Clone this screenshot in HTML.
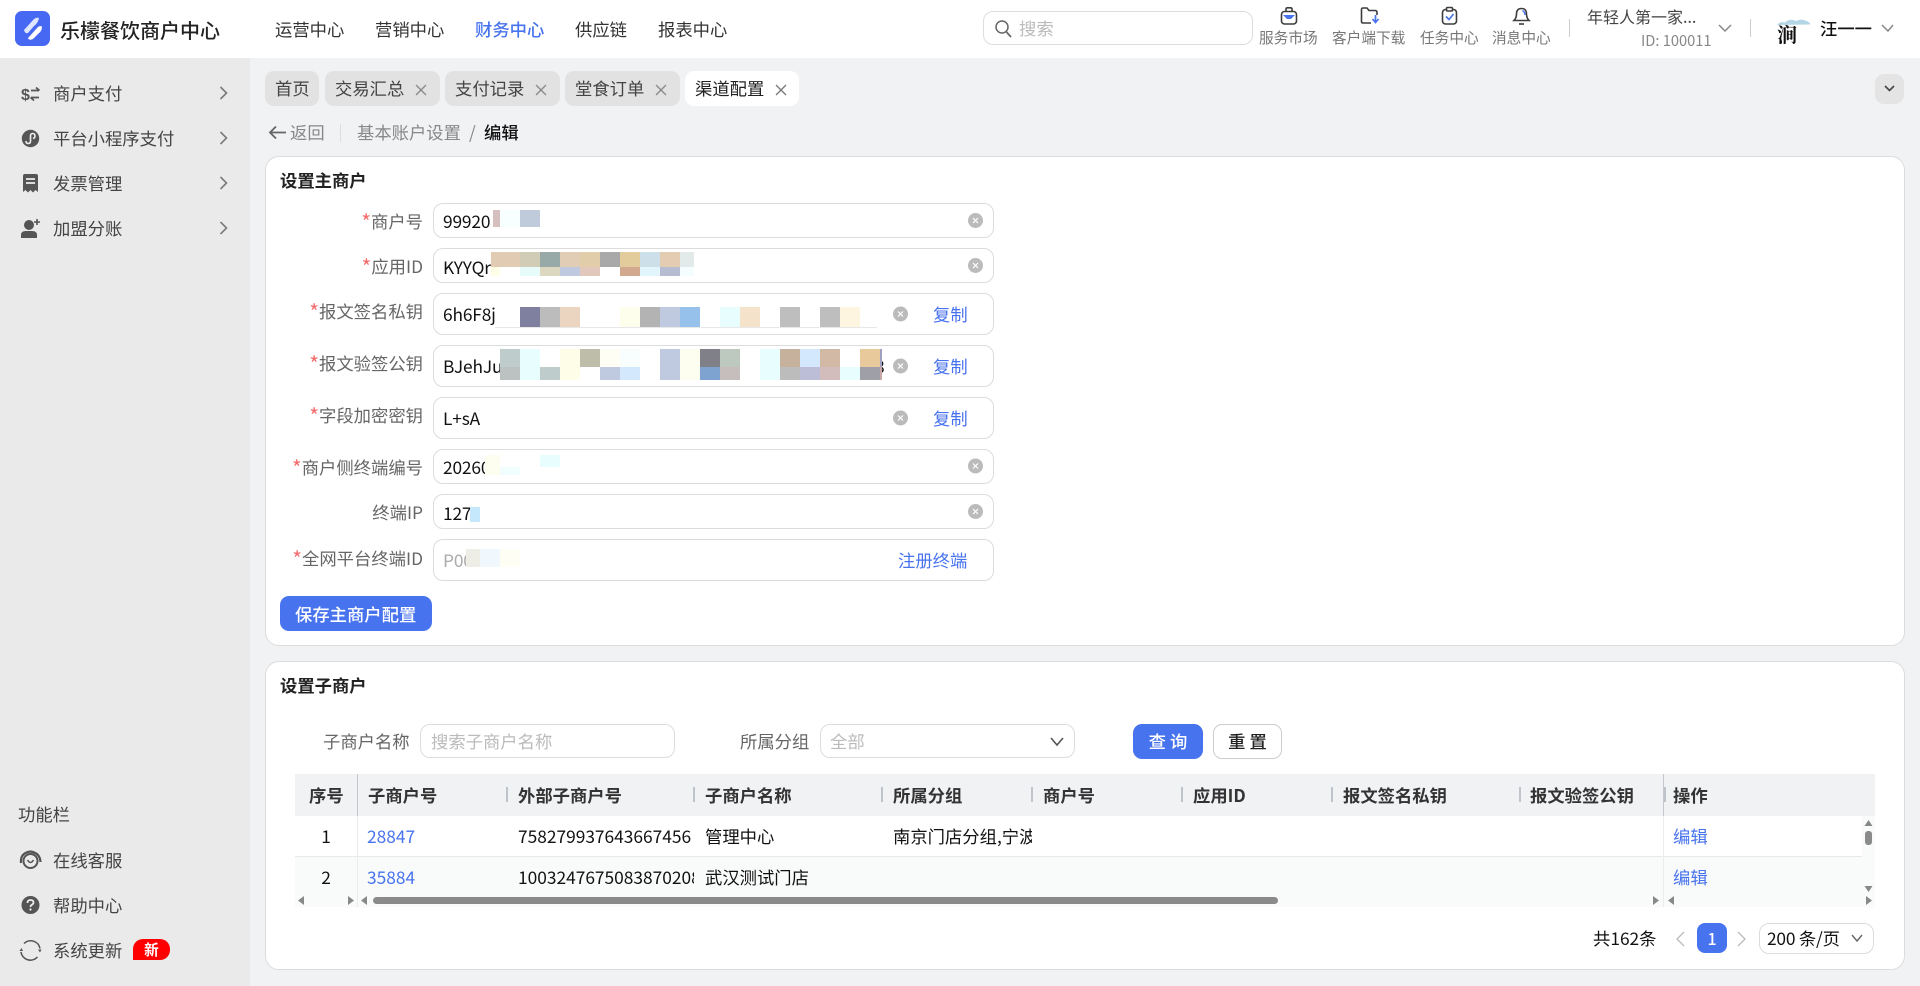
<!DOCTYPE html>
<html lang="zh-CN"><head><meta charset="utf-8"><title>乐檬餐饮商户中心</title>
<style>
html,body{margin:0;padding:0}
body{width:1920px;height:986px;overflow:hidden;position:relative;background:#f1f2f4;font-family:"Noto Sans CJK SC","Liberation Sans",sans-serif;font-size:17.33px;color:#333}
.b{position:absolute;box-sizing:border-box}
.t{position:absolute;white-space:nowrap;height:24px;line-height:24px;overflow:hidden}
.inp{position:absolute;box-sizing:border-box;left:433px;width:561px;background:#fff;border:1.5px solid #dcdcdc;border-radius:10px}
.lab{position:absolute;left:260px;width:163px;text-align:right;white-space:nowrap;height:24px;line-height:24px;color:#666}
.lab i{font-style:normal;color:#f56c6c;font-size:21px;line-height:0;position:relative;top:2px}
.v{position:absolute;left:443px;white-space:nowrap;height:24px;line-height:24px;color:#111;letter-spacing:-.15px}
.a{color:#4873ee}
.tab{position:absolute;top:71px;height:35px;background:#e2e2e2;border-radius:9px}
.h{font-weight:700;color:#333}
.sep{position:absolute;top:787px;width:1.5px;height:15px;background:#bfc3cc}
</style></head><body>
<!-- header -->
<div class="b" style="left:0;top:0;width:1920px;height:58px;background:#fff"></div>
<div class="t" style="left:60px;top:18px;font-size:20px;color:#222;font-weight:500">乐檬餐饮商户中心</div>
<div class="t" style="left:275px;top:17px;color:#333">运营中心</div>
<div class="t" style="left:375px;top:17px;color:#333">营销中心</div>
<div class="t a" style="left:475px;top:17px;font-weight:500">财务中心</div>
<div class="t" style="left:575px;top:17px;color:#333">供应链</div>
<div class="t" style="left:658px;top:17px;color:#333">报表中心</div>
<div class="b" style="left:983px;top:11px;width:270px;height:34px;border:1.5px solid #ddd;border-radius:10px;background:#fff"></div>
<div class="t" style="left:1019px;top:16px;color:#bbb">搜索</div>
<div class="t" style="left:1259px;top:26px;font-size:14.67px;color:#777">服务市场</div>
<div class="t" style="left:1332px;top:26px;font-size:14.67px;color:#777">客户端下载</div>
<div class="t" style="left:1420px;top:26px;font-size:14.67px;color:#777">任务中心</div>
<div class="t" style="left:1492px;top:26px;font-size:14.67px;color:#777">消息中心</div>
<div class="t" style="left:1587px;top:4px;font-size:16px;color:#444">年轻人第一家...</div>
<div class="t" style="left:1641px;top:29px;font-size:14.67px;color:#888">ID: 100011</div>
<div class="b" style="left:1569px;top:19px;width:1px;height:18px;background:#ccc"></div>
<div class="b" style="left:1750px;top:19px;width:1px;height:18px;background:#ccc"></div>
<div class="t" style="left:1820px;top:16px;color:#111;font-weight:500">汪一一</div>
<!-- sidebar -->
<div class="b" style="left:0;top:58px;width:250px;height:928px;background:#eaeaea"></div>
<div class="t" style="left:53px;top:81px;color:#444">商户支付</div>
<div class="t" style="left:53px;top:126px;color:#444">平台小程序支付</div>
<div class="t" style="left:53px;top:171px;color:#444">发票管理</div>
<div class="t" style="left:53px;top:216px;color:#444">加盟分账</div>
<div class="t" style="left:18px;top:802px;color:#444">功能栏</div>
<div class="t" style="left:53px;top:848px;color:#444">在线客服</div>
<div class="t" style="left:53px;top:893px;color:#444">帮助中心</div>
<div class="t" style="left:53px;top:938px;color:#444">系统更新</div>
<div class="b" style="left:133px;top:939px;width:37px;height:21px;background:#f00;border-radius:10px 10px 10px 0;color:#fff;font-size:14.67px;font-weight:700;text-align:center;line-height:21px">新</div>
<!-- tabs -->
<div class="tab" style="left:265px;width:54px"></div>
<div class="tab" style="left:325px;width:115px"></div>
<div class="tab" style="left:445px;width:115px"></div>
<div class="tab" style="left:565px;width:115px"></div>
<div class="tab" style="left:685px;width:114px;background:#fff"></div>
<div class="t" style="left:275px;top:76px;color:#444">首页</div>
<div class="t" style="left:335px;top:76px;color:#444">交易汇总</div>
<div class="t" style="left:455px;top:76px;color:#444">支付记录</div>
<div class="t" style="left:575px;top:76px;color:#444">堂食订单</div>
<div class="t" style="left:695px;top:76px;color:#222">渠道配置</div>
<div class="b" style="left:1875px;top:74px;width:29px;height:30px;background:#e4e4e4;border-radius:9px"></div>
<!-- breadcrumb -->
<div class="t" style="left:290px;top:120px;color:#888">返回</div>
<div class="b" style="left:340px;top:124px;width:1px;height:18px;background:#ddd"></div>
<div class="t" style="left:357px;top:120px;color:#888">基本账户设置</div>
<div class="t" style="left:469px;top:120px;color:#888">/</div>
<div class="t" style="left:484px;top:120px;color:#111;font-weight:500">编辑</div>
<!-- card 1 -->
<div class="b" style="left:265px;top:156px;width:1640px;height:490px;background:#fff;border:1.5px solid #dcdcdc;border-radius:14px"></div>
<div class="t h" style="left:280px;top:168px;color:#222">设置主商户</div>

<div class="inp" style="top:203px;height:35px"></div>
<div class="inp" style="top:248px;height:35px"></div>
<div class="inp" style="top:293px;height:42px"></div>
<div class="inp" style="top:345px;height:42px"></div>
<div class="inp" style="top:397px;height:42px"></div>
<div class="inp" style="top:449px;height:35px"></div>
<div class="inp" style="top:494px;height:35px"></div>
<div class="inp" style="top:539px;height:42px"></div>

<div class="lab" style="top:209px"><i>*</i>商户号</div>
<div class="lab" style="top:254px"><i>*</i>应用ID</div>
<div class="lab" style="top:299px"><i>*</i>报文签名私钥</div>
<div class="lab" style="top:351px"><i>*</i>报文验签公钥</div>
<div class="lab" style="top:403px"><i>*</i>字段加密密钥</div>
<div class="lab" style="top:455px"><i>*</i>商户侧终端编号</div>
<div class="lab" style="top:500px">终端IP</div>
<div class="lab" style="top:546px"><i>*</i>全网平台终端ID</div>

<div class="v" style="top:209px">99920</div>
<div class="v" style="top:255px">KYYQr</div>
<div class="v" style="top:302px">6h6F8j</div>
<div class="v" style="top:354px">BJehJu-</div>
<div class="v" style="left:875px;top:354px">8</div>
<div class="v" style="top:406px">L+sA</div>
<div class="v" style="top:455px">20260</div>
<div class="v" style="top:501px">127</div>
<div class="v" style="top:548px;color:#aaa">P00</div>

<div class="t a" style="left:933px;top:302px">复制</div>
<div class="t a" style="left:933px;top:354px">复制</div>
<div class="t a" style="left:933px;top:406px">复制</div>
<div class="t a" style="left:898px;top:548px">注册终端</div>

<div class="b" style="left:280px;top:596px;width:152px;height:35px;background:#4873ee;border-radius:9px"></div>
<div class="t" style="left:295px;top:602px;color:#fff;font-weight:500">保存主商户配置</div>

<!-- card 2 -->
<div class="b" style="left:265px;top:661px;width:1640px;height:309px;background:#fff;border:1.5px solid #dcdcdc;border-radius:14px"></div>
<div class="t h" style="left:280px;top:673px;color:#222">设置子商户</div>
<div class="t" style="left:323px;top:729px;color:#666">子商户名称</div>
<div class="b" style="left:420px;top:724px;width:255px;height:34px;border:1.5px solid #dcdcdc;border-radius:10px"></div>
<div class="t" style="left:431px;top:729px;color:#bbb">搜索子商户名称</div>
<div class="t" style="left:740px;top:729px;color:#666">所属分组</div>
<div class="b" style="left:820px;top:724px;width:255px;height:34px;border:1.5px solid #dcdcdc;border-radius:10px"></div>
<div class="t" style="left:830px;top:729px;color:#bbb">全部</div>
<div class="b" style="left:1133px;top:724px;width:70px;height:35px;background:#4873ee;border-radius:9px;color:#fff;text-align:center;line-height:34px;font-weight:500;letter-spacing:4px;padding-left:4px">查询</div>
<div class="b" style="left:1213px;top:724px;width:69px;height:35px;background:#fff;border:1.5px solid #ccc;border-radius:9px;color:#222;text-align:center;line-height:31px;font-weight:500;letter-spacing:4px;padding-left:4px">重置</div>

<!-- table -->
<div class="b" style="left:295px;top:774px;width:1580px;height:42px;background:#f1f2f4"></div>
<div class="b" style="left:295px;top:856px;width:1567px;height:1px;background:#e9e9e9"></div>
<div class="b" style="left:295px;top:857px;width:1580px;height:50px;background:#f9fafa"></div>
<div class="b" style="left:1862px;top:816px;width:13px;height:41px;background:#f9fafa"></div>
<div class="b" style="left:357px;top:774px;width:1px;height:42px;background:#c4c7cd"></div>
<div class="b" style="left:357px;top:816px;width:1px;height:91px;background:#ececec"></div>
<div class="b" style="left:1663px;top:774px;width:1px;height:42px;background:#c4c7cd"></div>
<div class="b" style="left:1663px;top:816px;width:1px;height:91px;background:#ececec"></div>
<div class="sep" style="left:506px"></div><div class="sep" style="left:693px"></div><div class="sep" style="left:881px"></div><div class="sep" style="left:1031px"></div><div class="sep" style="left:1181px"></div><div class="sep" style="left:1331px"></div><div class="sep" style="left:1519px"></div><div class="sep" style="left:1664px"></div>
<div class="t h" style="left:309px;top:783px">序号</div>
<div class="t h" style="left:368px;top:783px">子商户号</div>
<div class="t h" style="left:518px;top:783px">外部子商户号</div>
<div class="t h" style="left:705px;top:783px">子商户名称</div>
<div class="t h" style="left:893px;top:783px">所属分组</div>
<div class="t h" style="left:1043px;top:783px">商户号</div>
<div class="t h" style="left:1193px;top:783px">应用ID</div>
<div class="t h" style="left:1343px;top:783px">报文签名私钥</div>
<div class="t h" style="left:1530px;top:783px">报文验签公钥</div>
<div class="t h" style="left:1673px;top:783px">操作</div>

<div class="t" style="left:295px;width:62px;text-align:center;top:824px;color:#111">1</div>
<div class="t a" style="left:367px;top:824px">28847</div>
<div class="t" style="left:518px;width:176px;top:824px;color:#111">758279937643667456</div>
<div class="t" style="left:705px;top:824px;color:#111">管理中心</div>
<div class="t" style="left:893px;width:139px;top:824px;color:#111">南京门店分组,宁波</div>
<div class="t a" style="left:1673px;top:824px">编辑</div>
<div class="t" style="left:295px;width:62px;text-align:center;top:865px;color:#111">2</div>
<div class="t a" style="left:367px;top:865px">35884</div>
<div class="t" style="left:518px;width:176px;top:865px;color:#111">100324767508387020812</div>
<div class="t" style="left:705px;top:865px;color:#111">武汉测试门店</div>
<div class="t a" style="left:1673px;top:865px">编辑</div>
<div class="b" style="left:373px;top:897px;width:905px;height:7px;background:#8a8a8a;border-radius:4px"></div>
<div class="b" style="left:1865px;top:831px;width:7px;height:14px;background:#8a8a8a;border-radius:3px"></div>

<!-- pagination -->
<div class="t" style="left:1593px;top:926px;color:#111">共162条</div>
<div class="b" style="left:1697px;top:923px;width:30px;height:30px;background:#4873ee;border-radius:8px;color:#fff;text-align:center;line-height:30px;font-size:16px;font-weight:500">1</div>
<div class="b" style="left:1759px;top:923px;width:115px;height:31px;border:1.5px solid #dcdcdc;border-radius:10px"></div>
<div class="t" style="left:1767px;top:926px;color:#111;letter-spacing:-.2px">200 条/页</div>

<!-- overlay: mosaics and icons -->
<svg class="b" style="left:0;top:0" width="1920" height="986" viewBox="0 0 1920 986" fill="none">
<!-- logo -->
<rect x="15" y="11" width="35" height="35" rx="7" fill="#4668f2"/>
<path d="M24 30 L34 19 Q37 17 39 18 Q38 23 34 26 L28 33 Q25 34 24 30Z" fill="#dfe6ff"/>
<path d="M28 38 L38 27 Q41 25 42 27 Q42 31 38 34 L33 39 Q29 41 28 38Z" fill="#fff"/>
<!-- header chevrons -->
<circle cx="1002" cy="27" r="6" stroke="#666" stroke-width="1.5"/><path d="M1006.5 32 L1011 37" stroke="#666" stroke-width="1.7"/>
<g stroke="#888" stroke-width="1.5"><path d="M1719 25 L1725 31 L1731 25"/><path d="M1882 25 L1888 31 L1893 25"/></g>
<!-- top icons -->
<g stroke="#3d3d3d" stroke-width="1.6">
<rect x="1281.5" y="11.5" width="15" height="12.5" rx="3"/><path d="M1286 11 V9 Q1286 7.8 1287.5 7.8 H1290.5 Q1292 7.8 1292 9 V11"/>
<path d="M1361.5 21.5 V9.5 Q1361.5 8 1363 8 H1367 L1369 10.5 H1375 Q1377 10.5 1377 12.5 V15 M1361.5 21.5 Q1361.5 23 1363 23 H1371"/>
<rect x="1442.5" y="9.5" width="14" height="14.5" rx="3"/><rect x="1446.5" y="7.5" width="6" height="3.5" rx="1" fill="#fff"/>
<path d="M1514 20.5 H1529 Q1526.5 18 1526.5 14 Q1526.5 8.5 1521.5 8.5 Q1516.5 8.5 1516.5 14 Q1516.5 18 1514 20.5Z"/><path d="M1519 24 H1524"/>
</g>
<path d="M1283 15 H1295 L1291 19 H1287Z" fill="#4873ee"/>
<path d="M1375.5 15 V21.5 M1372.5 19 L1375.5 22.5 L1378.5 19" stroke="#4873ee" stroke-width="1.7"/>
<path d="M1446 16.5 L1449 19.5 L1453.5 14" stroke="#4873ee" stroke-width="1.7"/>
<path d="M1522.5 10.5 Q1525 12 1525 15" stroke="#4873ee" stroke-width="1.5"/>
<!-- avatar -->
<circle cx="1791" cy="28.5" r="18.5" fill="#fff"/>
<path d="M1777 25 Q1780 21 1785 22.500 Q1790 18 1796 21 Q1802 17.500 1810 23 L1810 24.500 L1777 25Z" fill="#b4d6e6"/>
<text x="1777" y="42" font-family="Noto Serif CJK SC,serif" font-size="20" font-weight="700" fill="#111">涧</text>
<!-- sidebar icons -->
<text x="21" y="100" font-family="Liberation Sans,sans-serif" font-size="16" font-weight="700" fill="#555">$</text>
<g stroke="#555" stroke-width="1.8"><path d="M31 90.500 H39 M36 87.500 L39.500 90.500"/><path d="M39 97.500 H31 M34 100.500 L30.500 97.500"/></g>
<circle cx="30.5" cy="138.5" r="8.7" fill="#555"/>
<path d="M26 141 Q26 143.5 28.3 143.5 Q30.5 143.5 30.5 141 V136 Q30.5 133.5 32.7 133.5 Q35 133.5 35 136 Q35 138 33 138.500" stroke="#eee" stroke-width="1.6"/>
<path d="M23 176 Q23 174 25 174 H36 Q38 174 38 176 V192 L35.500 190 L33 192.500 L30.500 190 L28 192.500 L25.500 190 L23 192Z" fill="#555"/>
<path d="M26 179 H35 M26 183 H35" stroke="#eee" stroke-width="1.7"/>
<circle cx="29" cy="225" r="5" fill="#555"/><path d="M21 238 V235 Q21 231 26 231 H32 Q37 231 37 235 V238Z" fill="#555"/>
<path d="M37 219 V225 M34 222 H40" stroke="#555" stroke-width="1.6"/>
<g stroke="#7a7a7a" stroke-width="1.6"><path d="M220.500 87 L226.500 93 L220.500 99"/><path d="M220.500 132 L226.500 138 L220.500 144"/><path d="M220.500 177 L226.500 183 L220.500 189"/><path d="M220.500 222 L226.500 228 L220.500 234"/></g>
<!-- function icons -->
<circle cx="30.500" cy="861" r="7" stroke="#555" stroke-width="2"/><path d="M27.500 860 Q30.500 865 33.500 860" stroke="#555" stroke-width="1.5"/>
<path d="M21 863 Q20 853 30.500 851.500 Q40 853 40.500 862" stroke="#555" stroke-width="2.200"/>
<circle cx="30.500" cy="905" r="9" fill="#555"/>
<path d="M27.500 903 Q27.500 900 30.500 900 Q33.500 900 33.500 902.500 Q33.500 904 31.500 905 Q30.500 905.500 30.500 907" stroke="#eee" stroke-width="1.700"/><circle cx="30.500" cy="909.500" r="1.100" fill="#eee"/>
<path d="M24 943.500 A9.500 9.500 0 0 1 40 948.500" stroke="#555" stroke-width="1.500"/><path d="M37.500 957 A9.500 9.500 0 0 1 21 952" stroke="#555" stroke-width="1.500"/>
<path d="M38 949.500 L41.500 949.500 L40 952.500Z M19.500 951 L23 951 L21.500 948Z" fill="#555"/>
<!-- tab close -->
<g stroke="#888" stroke-width="1.300"><path d="M416 85 L426 95 M426 85 L416 95"/><path d="M536 85 L546 95 M546 85 L536 95"/><path d="M656 85 L666 95 M666 85 L656 95"/></g>
<path d="M776 85 L786 95 M786 85 L776 95" stroke="#777" stroke-width="1.300"/>
<path d="M1885 86 L1889.500 90.500 L1894 86" stroke="#444" stroke-width="1.600"/>
<!-- back arrow -->
<path d="M270 132.500 H286 M276 126.500 L270 132.500 L276 138.500" stroke="#666" stroke-width="1.800"/>
<!-- clear icons -->
<g>
<circle cx="975.500" cy="220.500" r="7.500" fill="#bbb"/><circle cx="975.500" cy="265.500" r="7.500" fill="#bbb"/>
<circle cx="900.500" cy="314" r="7.500" fill="#bbb"/><circle cx="900.500" cy="366" r="7.500" fill="#bbb"/><circle cx="900.500" cy="418" r="7.500" fill="#bbb"/>
<circle cx="975.500" cy="466" r="7.500" fill="#bbb"/><circle cx="975.500" cy="511.500" r="7.500" fill="#bbb"/>
</g>
<g stroke="#fff" stroke-width="1.200">
<path d="M973 218 l5 5 m0 -5 l-5 5"/><path d="M973 263 l5 5 m0 -5 l-5 5"/>
<path d="M898 311.500 l5 5 m0 -5 l-5 5"/><path d="M898 363.500 l5 5 m0 -5 l-5 5"/><path d="M898 415.500 l5 5 m0 -5 l-5 5"/>
<path d="M973 463.500 l5 5 m0 -5 l-5 5"/><path d="M973 509 l5 5 m0 -5 l-5 5"/>
</g>
<!-- mosaics -->
<g shape-rendering="crispEdges">
<rect x="493" y="210" width="7" height="17" fill="#d5bfbf"/><rect x="500" y="210" width="20" height="17" fill="#f8ffff"/><rect x="520" y="210" width="20" height="17" fill="#bfcadb"/>
<!-- row 2 -->
<rect x="491" y="252" width="29" height="15" fill="#e1ccb3"/><rect x="520" y="252" width="20" height="15" fill="#d0ccb5"/><rect x="540" y="252" width="20" height="15" fill="#98aaa8"/><rect x="560" y="252" width="20" height="15" fill="#e1ccb5"/><rect x="580" y="252" width="20" height="15" fill="#e2cdaa"/><rect x="600" y="252" width="20" height="15" fill="#a9a9a9"/><rect x="620" y="252" width="20" height="15" fill="#e3cc9c"/><rect x="640" y="252" width="20" height="15" fill="#cde0ea"/><rect x="660" y="252" width="20" height="15" fill="#e3ccb1"/><rect x="680" y="252" width="14" height="15" fill="#e2eaea"/>
<rect x="491" y="267" width="9" height="9" fill="#fefde5"/><rect x="500" y="267" width="20" height="9" fill="#fff"/><rect x="520" y="267" width="20" height="9" fill="#e8fbfb"/><rect x="540" y="267" width="20" height="9" fill="#dcd8c0"/><rect x="560" y="267" width="20" height="9" fill="#bfcae0"/><rect x="580" y="267" width="20" height="9" fill="#e2c8bc"/><rect x="600" y="267" width="20" height="9" fill="#fff"/><rect x="620" y="267" width="20" height="9" fill="#d2a88e"/><rect x="640" y="267" width="20" height="9" fill="#e2f5fd"/><rect x="660" y="267" width="20" height="9" fill="#b6bdd1"/><rect x="680" y="267" width="14" height="9" fill="#f5fefe"/>
<!-- row 3 -->
<rect x="497" y="307" width="380" height="20" fill="#fff"/><rect x="495" y="327" width="382" height="1" fill="#e8e8e8"/>
<rect x="520" y="307" width="20" height="20" fill="#7f7f9f"/><rect x="540" y="307" width="20" height="20" fill="#bcbcbc"/><rect x="560" y="307" width="20" height="20" fill="#ebd5c0"/><rect x="620" y="307" width="20" height="20" fill="#fefeec"/><rect x="640" y="307" width="20" height="20" fill="#b3b3b3"/><rect x="660" y="307" width="20" height="20" fill="#bfc9e0"/><rect x="680" y="307" width="20" height="20" fill="#96c1ea"/><rect x="720" y="307" width="20" height="20" fill="#e8fdfd"/><rect x="740" y="307" width="20" height="20" fill="#f5e2cb"/><rect x="780" y="307" width="20" height="20" fill="#bebebe"/><rect x="820" y="307" width="20" height="20" fill="#bebebe"/><rect x="840" y="307" width="20" height="20" fill="#fef5e1"/>
<!-- row 4 top -->
<rect x="500" y="349" width="20" height="18" fill="#bfcccc"/><rect x="520" y="349" width="20" height="18" fill="#e8fdfd"/><rect x="540" y="349" width="20" height="18" fill="#fff"/><rect x="560" y="349" width="20" height="18" fill="#fefee8"/><rect x="580" y="349" width="20" height="18" fill="#bdbdaa"/><rect x="600" y="349" width="20" height="18" fill="#fefef5"/><rect x="620" y="349" width="20" height="18" fill="#f8fdfd"/><rect x="640" y="349" width="20" height="18" fill="#fff"/><rect x="660" y="349" width="20" height="18" fill="#bfc9e0"/><rect x="680" y="349" width="20" height="18" fill="#fefef0"/><rect x="700" y="349" width="20" height="18" fill="#808088"/><rect x="720" y="349" width="20" height="18" fill="#bdc8bf"/><rect x="740" y="349" width="20" height="18" fill="#fff"/><rect x="760" y="349" width="20" height="18" fill="#e8fdfd"/><rect x="780" y="349" width="20" height="18" fill="#c6b29c"/><rect x="800" y="349" width="20" height="18" fill="#d3e8fd"/><rect x="820" y="349" width="20" height="18" fill="#d2b9a6"/><rect x="840" y="349" width="20" height="18" fill="#fff"/><rect x="860" y="349" width="20" height="18" fill="#e8c99c"/><rect x="880" y="349" width="2" height="18" fill="#a0a0c0"/>
<!-- row 4 bottom -->
<rect x="500" y="367" width="20" height="13" fill="#bcc2c2"/><rect x="520" y="367" width="20" height="13" fill="#e8fdfd"/><rect x="540" y="367" width="20" height="13" fill="#bfcccc"/><rect x="560" y="367" width="20" height="13" fill="#fefee8"/><rect x="580" y="367" width="20" height="13" fill="#fff"/><rect x="600" y="367" width="20" height="13" fill="#bfc9e0"/><rect x="620" y="367" width="20" height="13" fill="#d3e8fd"/><rect x="640" y="367" width="20" height="13" fill="#fff"/><rect x="660" y="367" width="20" height="13" fill="#bfc9e0"/><rect x="680" y="367" width="20" height="13" fill="#fefef0"/><rect x="700" y="367" width="20" height="13" fill="#7fa3d0"/><rect x="720" y="367" width="20" height="13" fill="#c6bdbd"/><rect x="740" y="367" width="20" height="13" fill="#fff"/><rect x="760" y="367" width="20" height="13" fill="#e8fdfd"/><rect x="780" y="367" width="20" height="13" fill="#bcbcbc"/><rect x="800" y="367" width="20" height="13" fill="#bcbed8"/><rect x="820" y="367" width="20" height="13" fill="#d3bcbc"/><rect x="840" y="367" width="20" height="13" fill="#e8fdfd"/><rect x="860" y="367" width="20" height="13" fill="#9f9fa8"/><rect x="880" y="367" width="2" height="13" fill="#c8a8a8"/>
<!-- row 6,7,8 -->
<rect x="485" y="455" width="15" height="20" fill="#fefef0"/><rect x="500" y="467" width="20" height="8" fill="#f0fefe"/><rect x="540" y="455" width="20" height="12" fill="#e8fdfd"/>
<rect x="470" y="507" width="10" height="15" fill="#c5e8fd"/>
<rect x="466" y="549" width="14" height="18" fill="#eeeee6"/><rect x="480" y="549" width="20" height="18" fill="#f0f8fe"/><rect x="500" y="549" width="20" height="18" fill="#fefef4"/>
</g>
<!-- select chevrons -->
<path d="M1051 738 L1057 745 L1063 738" stroke="#555" stroke-width="1.600"/>
<path d="M1852 935 L1857 941 L1862 935" stroke="#666" stroke-width="1.400"/>
<path d="M1684 932 L1677 939 L1684 946" stroke="#bbb" stroke-width="1.300"/>
<path d="M1738 932 L1745 939 L1738 946" stroke="#bbb" stroke-width="1.300"/>
<!-- scroll arrows -->
<g fill="#888">
<path d="M304 896 L298 900.500 L304 905Z"/><path d="M348 896 L354 900.500 L348 905Z"/><path d="M367 896 L361 900.500 L367 905Z"/>
<path d="M1653 896 L1659 900.500 L1653 905Z"/><path d="M1674 896 L1668 900.500 L1674 905Z"/><path d="M1866 896 L1872 900.500 L1866 905Z"/>
<path d="M1868.500 820 L1864.500 826 L1872.500 826Z"/><path d="M1868.500 892 L1864.500 886 L1872.500 886Z"/>
</g>
</svg>
</body></html>
